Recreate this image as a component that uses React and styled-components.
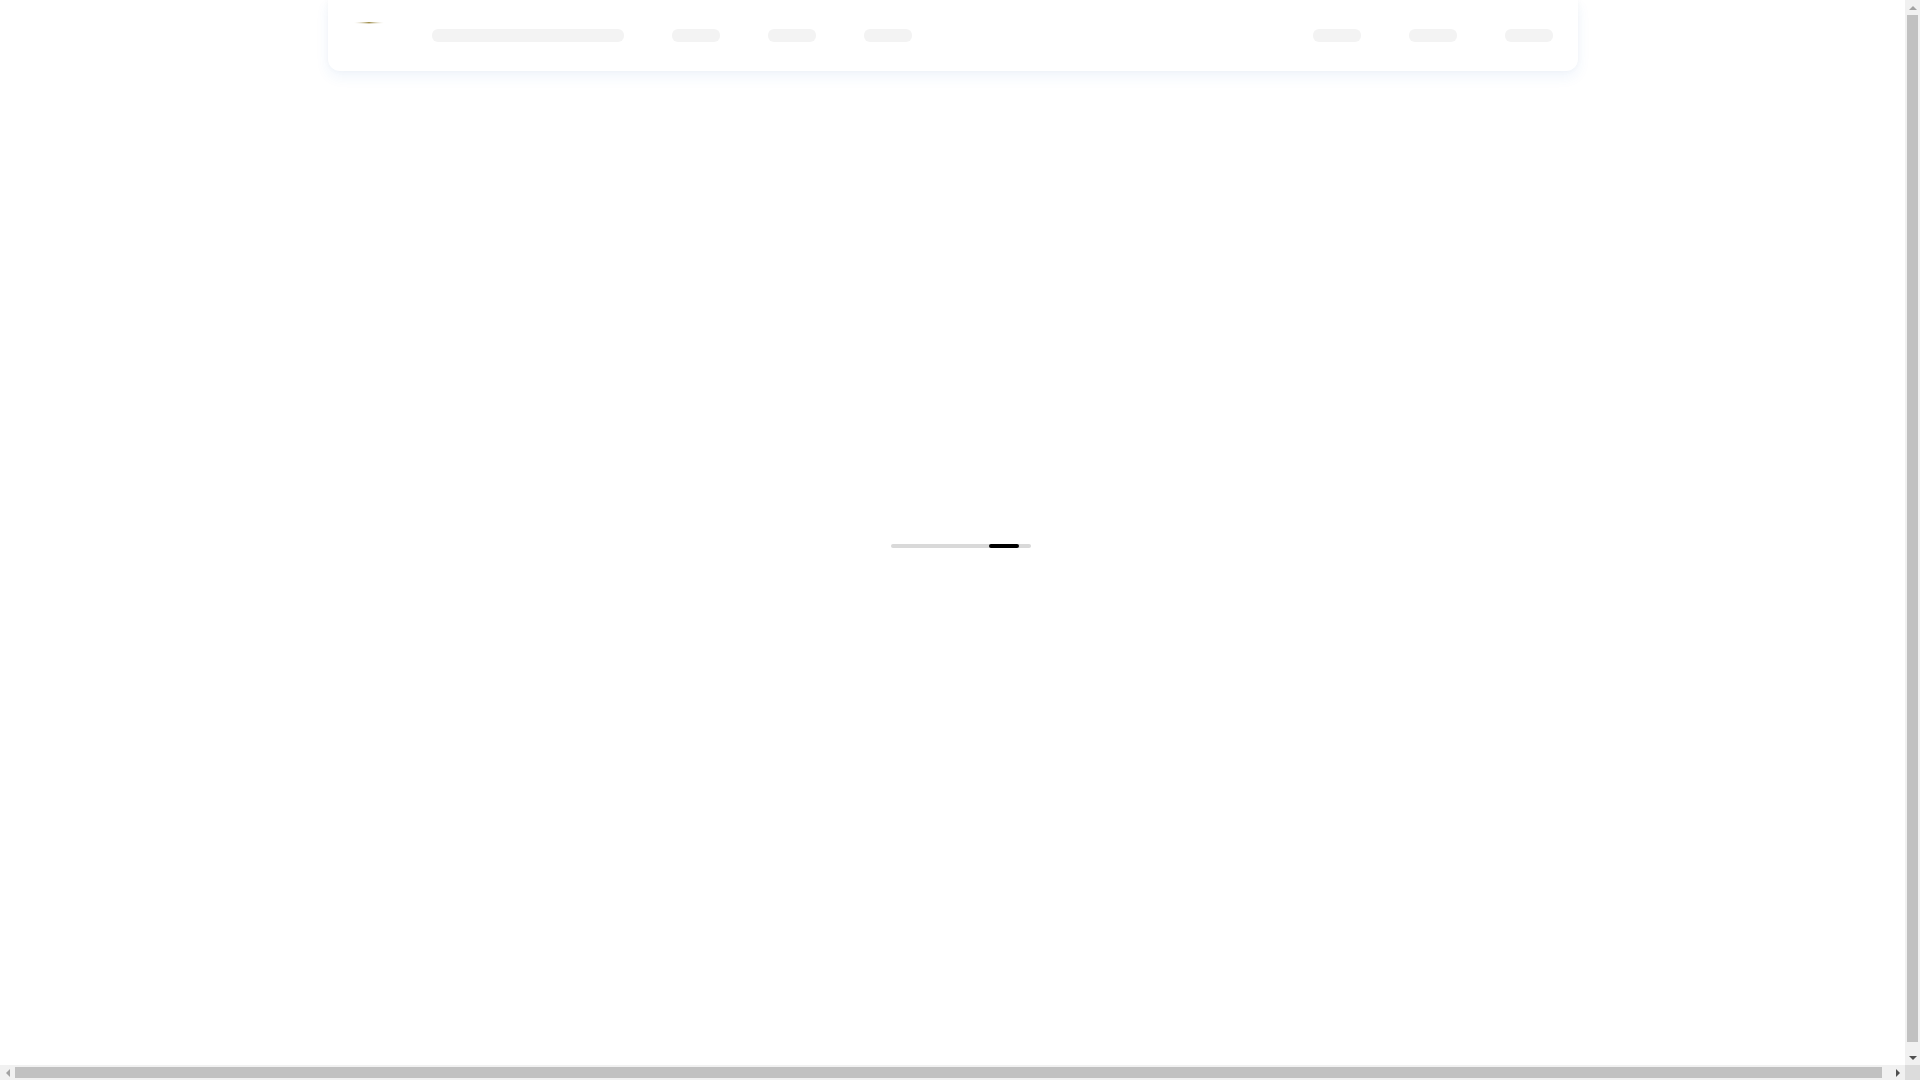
import styled, { createGlobalStyle, css } from 'styled-components';

const GlobalStyle = createGlobalStyle`
  html, body {
    margin: 0;
    padding: 0;
    background: #ffffff;
    font-family: "Inter", "Liberation Sans", sans-serif;
    overflow: hidden;
  }
`;

const App = () => {
  return (
    <>
      <GlobalStyle />
      <Page>
        <Header>
          <Nav>
            <Left>
              <Logo width='30' height='28' viewBox='0 0 30 28' aria-label='logo'>
                <defs>
                  <linearGradient id='logoLine' x1='0' x2='1' y1='0' y2='0'>
                    <stop offset='0' stopColor='#e8e4d6' stopOpacity='0' />
                    <stop offset='0.5' stopColor='#9c8a45' />
                    <stop offset='1' stopColor='#e8e4d6' stopOpacity='0' />
                  </linearGradient>
                </defs>
                <rect x='0' y='0' width='30' height='1.4' fill='url(#logoLine)' />
              </Logo>
              <Skeleton $width={192} />
              <Skeleton $width={48} />
              <Skeleton $width={48} />
              <Skeleton $width={48} />
            </Left>
            <Right>
              <Skeleton $width={48} />
              <Skeleton $width={48} />
              <Skeleton $width={48} />
            </Right>
          </Nav>
        </Header>
        <Main>
          <Loader>
            <LoaderBar style={{ left: 98 }} />
          </Loader>
        </Main>
      </Page>

      {/* window scrollbars */}
      <VScroll>
        <ArrowButton>
          <Arrow $dir='up' $dim />
        </ArrowButton>
        <VTrack>
          <VThumb />
        </VTrack>
        <ArrowButton>
          <Arrow $dir='down' />
        </ArrowButton>
      </VScroll>
      <HScroll>
        <ArrowButton>
          <Arrow $dir='left' $dim />
        </ArrowButton>
        <HTrack>
          <HThumb />
        </HTrack>
        <ArrowButton>
          <Arrow $dir='right' />
        </ArrowButton>
      </HScroll>
      <Corner />
    </>
  );
};

const Page = styled.div`
  position: relative;
  width: calc(100vw - 15px);
  height: calc(100vh - 15px);
  overflow: hidden;
`;
const Header = styled.header`
  position: absolute;
  top: 0;
  left: 0;
  right: 0;
  z-index: 10;
  display: flex;
  justify-content: center;
`;
const Nav = styled.nav`
  box-sizing: border-box;
  width: 1250px;
  height: 71px;
  padding: 0 25px 0 26px;
  display: flex;
  align-items: center;
  justify-content: space-between;
  background: #ffffff;
  border-radius: 0 0 12px 12px;
  box-shadow: 0 6px 14px rgba(40, 110, 210, 0.07),
    0 0 6px rgba(0, 0, 0, 0.03);
`;
const Left = styled.div`
  display: flex;
  align-items: center;
  gap: 48px;
`;
const Right = styled.div`
  display: flex;
  align-items: center;
  gap: 48px;
`;
const Logo = styled.svg`
  display: block;
  flex: none;
`;
const Skeleton = styled.div`
  width: ${(props) => props.$width}px;
  height: 13px;
  border-radius: 6px;
  background: #f3f3f3;
`;
const Main = styled.main`
  width: calc(100% + 17px);
  height: 100vh;
  padding-top: 6px;
  display: flex;
  align-items: center;
  justify-content: center;
`;
const Loader = styled.div`
  position: relative;
  width: 140px;
  height: 4px;
  border-radius: 2px;
  background: #d9d9d9;
  overflow: hidden;
`;
const LoaderBar = styled.div`
  position: absolute;
  top: 0;
  width: 30px;
  height: 4px;
  border-radius: 2px;
  background: #000000;
`;

const VScroll = styled.div`
  position: fixed;
  top: 0;
  right: 0;
  bottom: 15px;
  width: 15px;
  display: flex;
  flex-direction: column;
  background: #f1f1f1;
`;
const HScroll = styled.div`
  position: fixed;
  left: 0;
  right: 15px;
  bottom: 0;
  height: 15px;
  display: flex;
  background: #f1f1f1;
`;
const Corner = styled.div`
  position: fixed;
  right: 0;
  bottom: 0;
  width: 15px;
  height: 15px;
  background: #dcdcdc;
`;
const ArrowButton = styled.div`
  flex: none;
  width: 15px;
  height: 15px;
  display: flex;
  align-items: center;
  justify-content: center;
`;
const Arrow = styled.div`
  width: 0;
  height: 0;
  ${({ $dir, $dim }) => {
    const color = $dim ? '#a3a3a3' : '#505050';
    if ($dir === 'up')
      return css`
        border-left: 4px solid transparent;
        border-right: 4px solid transparent;
        border-bottom: 4px solid ${color};
      `;
    if ($dir === 'down')
      return css`
        border-left: 4px solid transparent;
        border-right: 4px solid transparent;
        border-top: 4px solid ${color};
      `;
    if ($dir === 'left')
      return css`
        border-top: 4px solid transparent;
        border-bottom: 4px solid transparent;
        border-right: 4px solid ${color};
      `;
    return css`
      border-top: 4px solid transparent;
      border-bottom: 4px solid transparent;
      border-left: 4px solid ${color};
    `;
  }}
`;
const VTrack = styled.div`
  flex: 1;
  padding: 0 2px 8px 2px;
  display: flex;
  flex-direction: column;
`;
const VThumb = styled.div`
  flex: 1;
  background: #c1c1c1;
`;
const HTrack = styled.div`
  flex: 1;
  padding: 2px 8px 2px 0;
  display: flex;
`;
const HThumb = styled.div`
  flex: 1;
  background: #c1c1c1;
`;

export default App;
